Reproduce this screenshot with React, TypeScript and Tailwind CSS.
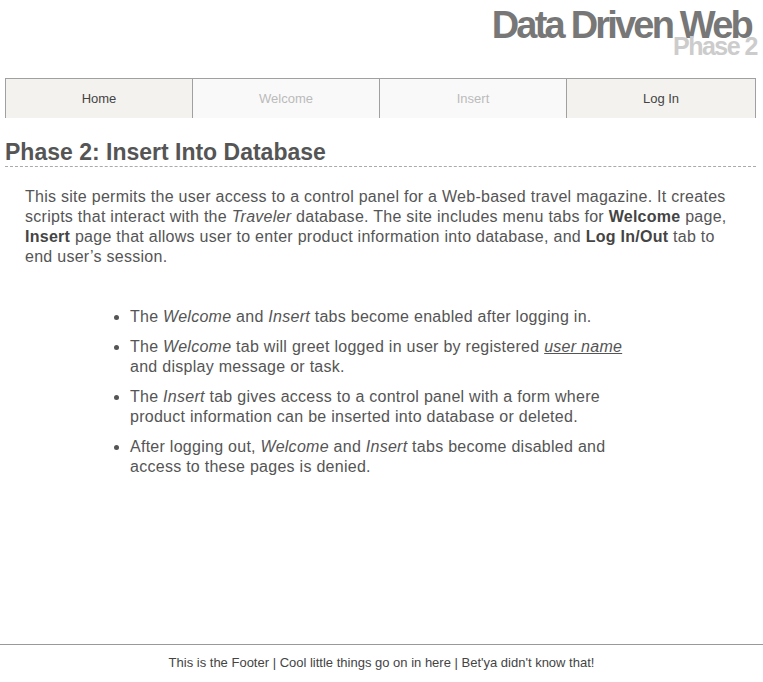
import React from "react"

const tabs = [
  { label: "Home", enabled: true },
  { label: "Welcome", enabled: false },
  { label: "Insert", enabled: false },
  { label: "Log In", enabled: true },
]

export default function App() {
  return (
    <div className="min-h-screen flex flex-col bg-white text-[#555] font-['Liberation_Sans',Arial,sans-serif]">
      <div className="flex-1 pl-[5px] pr-[7px]">
        {/* Header */}
        <header className="text-right pt-[6px]">
          <div className="text-[38px] leading-[38px] font-bold tracking-[-2.8px] text-[#777] pr-[5px]">
            Data Driven Web
          </div>
          <div className="-mt-[10px] text-[25px] leading-[25px] font-bold tracking-[-1.5px] text-[#ccc] -mr-[1px]">
            Phase 2
          </div>
        </header>

        {/* Tabs */}
        <nav className="mt-[19px] grid grid-cols-[187px_187px_187px_1fr]">
          {tabs.map((t, i) => (
            <div
              key={t.label}
              className={`h-[40px] flex items-center justify-center text-[13px] border-t border-l border-[#a0a0a0] ${
                i === tabs.length - 1 ? "border-r" : ""
              } ${t.enabled ? "bg-[#f3f2ee] text-[#444]" : "bg-[#f9f9f9] text-[#bbb]"}`}
            >
              {t.label}
            </div>
          ))}
        </nav>

        {/* Content */}
        <main className="pt-[20px]">
          <h1 className="text-[23px] leading-[28px] font-bold text-[#555] border-b border-dashed border-[#aaa]">
            Phase 2: Insert Into Database
          </h1>
          <p className="mt-[20px] px-[20px] text-[16px] leading-[20px] tracking-[0.27px] text-[#555]">
            This site permits the user access to a control panel for a Web-based travel magazine. It creates
            scripts that interact with the <em>Traveler</em> database. The site includes menu tabs for{" "}
            <strong className="text-[#444]">Welcome</strong> page, <strong className="text-[#444]">Insert</strong> page
            that allows user to enter product information into database, and{" "}
            <strong className="text-[#444]">Log In/Out</strong> tab to end user’s session.
          </p>
          <ul className="mt-[40px] ml-[125px] w-[510px] list-disc text-[16px] leading-[20px] tracking-[0.27px] text-[#555] flex flex-col gap-[10px]">
            <li>
              The <em>Welcome</em> and <em>Insert</em> tabs become enabled after logging in.
            </li>
            <li>
              The <em>Welcome</em> tab will greet logged in user by registered <em className="underline">user name</em>{" "}
              and display message or task.
            </li>
            <li>
              The <em>Insert</em> tab gives access to a control panel with a form where product information can be
              inserted into database or deleted.
            </li>
            <li>
              After logging out, <em>Welcome</em> and <em>Insert</em> tabs become disabled and access to these pages
              is denied.
            </li>
          </ul>
        </main>
      </div>

      {/* Footer */}
      <footer className="h-[38px] border-t border-[#999] pt-[10px] text-center text-[13px] leading-[15px] text-[#444]">
        This is the Footer | Cool little things go on in here | Bet'ya didn't know that!
      </footer>
    </div>
  )
}
